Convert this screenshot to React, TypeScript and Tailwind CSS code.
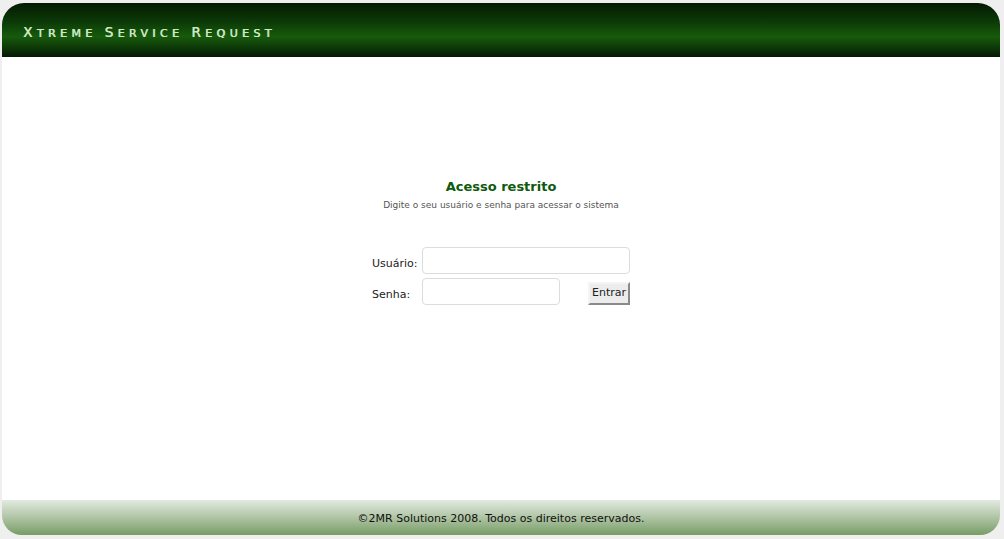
import React from 'react';

const titleWords = ['Xtreme', 'Service', 'Request'];

export default function App() {
  return (
    <div className="h-[539px] w-[1004px] bg-[#efefef] pt-[3px] pl-[2px] font-['DejaVu_Sans',sans-serif]">
      <div className="flex h-[532px] w-[998px] flex-col">
        <header className="flex h-[54px] items-center rounded-t-[22px] bg-[linear-gradient(to_bottom,#041a03_0%,#0c3a07_35%,#175a0c_62%,#0c3507_85%,#051804_100%)] pl-[21px] pt-[4px]">
          <h1 className="flex gap-[8px] tracking-[4.4px] text-[#cfe8c4] [text-shadow:0.6px_0_0_#cfe8c4]">
            {titleWords.map((w) => (
              <span key={w}>
                <span className="text-[13.5px]">{w[0]}</span>
                <span className="text-[11px] uppercase">{w.slice(1)}</span>
              </span>
            ))}
          </h1>
        </header>

        <main className="flex flex-1 flex-col items-center bg-white pt-[120px]">
          <h2 className="text-[13px] font-bold text-[#0d5a0d]">Acesso restrito</h2>
          <p className="mt-[2px] text-[9px] text-[#555]">Digite o seu usuário e senha para acessar o sistema</p>

          <form className="mt-[35px] flex flex-col gap-[4px] text-[11px] text-[#222]">
            <div className="flex items-center">
              <label className="w-[50px] pt-[7px]">Usuário:</label>
              <input className="h-[27px] w-[208px] rounded-[4px] border border-[#dcdcdc] bg-white" />
            </div>
            <div className="flex items-center">
              <label className="w-[50px] pt-[7px]">Senha:</label>
              <input type="password" className="h-[27px] w-[138px] rounded-[4px] border border-[#dcdcdc] bg-white" />
              <button
                type="button"
                className="ml-[28px] mt-[4px] h-[23px] w-[42px] border-2 border-t-[#f4f4f4] border-l-[#f4f4f4] border-r-[#8a8a8a] border-b-[#8a8a8a] bg-[#ececec] text-[11px] text-[#222]"
              >
                Entrar
              </button>
            </div>
          </form>
        </main>

        <footer className="flex h-[35px] items-center justify-center rounded-b-[20px] bg-[linear-gradient(to_bottom,#e2eadf_0%,#b4c8aa_45%,#779d66_100%)] pt-[4px] text-[11px] text-[#111]">
          ©2MR Solutions 2008. Todos os direitos reservados.
        </footer>
      </div>
    </div>
  );
}
